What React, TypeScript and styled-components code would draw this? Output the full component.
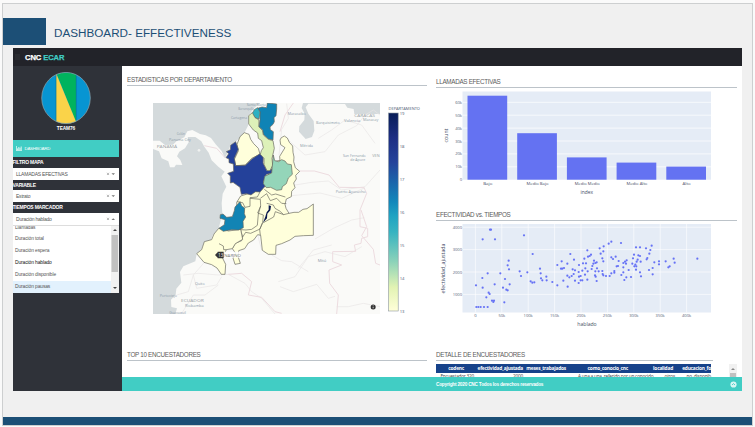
import React from 'react';
import styled, { createGlobalStyle } from 'styled-components';

const Global = createGlobalStyle`
  * { box-sizing: border-box; }
  body { margin: 0; background: #fafafa; font-family: "Liberation Sans", Arial, sans-serif; overflow: hidden; }
  svg { display: block; }
  svg text { font-family: "Open Sans", "Noto Sans", sans-serif; }
`;

/* ---------- slide frame ---------- */
const Page = styled.div`
  width: 755px;
  height: 427px;
  padding: 3px 2px 1px;
  overflow: hidden;
`;
const Slide = styled.main`
  display: flex;
  flex-direction: column;
  width: 751px;
  height: 423px;
  border: 1px solid #cdcfd0;
  background: #f0f0f0;
`;
const TitleRow = styled.header`
  display: flex;
  align-items: flex-start;
  height: 44px;
  padding-top: 14px;
`;
const Accent = styled.div`
  width: 43px;
  height: 27px;
  background: #1c4f76;
`;
const Title = styled.h1`
  margin: 0 0 0 8px;
  font-size: 11.7px;
  line-height: 30px;
  font-weight: 400;
  color: #1c4f76;
  letter-spacing: 0;
  white-space: nowrap;
`;
const BottomBar = styled.div`
  height: 8px;
  margin-top: auto;
  background: #1c4f76;
`;

/* ---------- dashboard ---------- */
const Dashboard = styled.section`
  display: grid;
  grid-template-columns: 109px 620px;
  grid-template-rows: 18px 311px 14px;
  width: 729px;
  height: 343px;
  margin-left: 10px;
  background: #fff;
  overflow: hidden;
`;
const TopBar = styled.div`
  display: flex;
  align-items: center;
  grid-column: 1 / 3;
  padding-left: 2px;
  background: #222329;
`;
const MenuIcon = styled.svg`
  width: 5px;
  height: 6px;
  margin-right: 5px;
`;
const Brand = styled.div`
  font: 700 7.6px/18px "Liberation Sans", Arial, sans-serif;
  color: #fff;
  letter-spacing: -0.1px;
  -webkit-text-stroke: 0.25px currentColor;
  padding-top: 1px;
  white-space: nowrap;
  span { color: #41cdc4; }
`;
const Sidebar = styled.aside`
  grid-row: 2 / 4;
  display: flex;
  flex-direction: column;
  padding-right: 3px;
  background: #2f3239;
  overflow: hidden;
`;
const Avatar = styled.svg`
  width: 50px;
  height: 52px;
  margin: 6px 0 0 28px;
  flex: none;
`;
const Team = styled.div`
  height: 9px;
  margin: 0 0 7px;
  text-align: center;
  font-size: 4.8px;
  line-height: 10px;
  font-weight: 700;
  letter-spacing: -0.1px;
  color: #fff;
`;
const NavButton = styled.div`
  display: flex;
  align-items: center;
  gap: 2.5px;
  flex: none;
  height: 17px;
  padding: 0 3px 1px;
  background: #41cdc4;
  color: #fff;
  font-size: 4.4px;
  letter-spacing: -0.25px;
`;
const FieldLabel = styled.div<{ $h: number }>`
  flex: none;
  height: ${p => p.$h}px;
  line-height: ${p => p.$h}px;
  margin-left: -0.5px;
  font-size: 5px;
  font-weight: 700;
  letter-spacing: -0.22px;
  color: #fff;
  white-space: nowrap;
`;
const Select = styled.div`
  display: flex;
  align-items: center;
  flex: none;
  height: 12px;
  padding: 0 3px;
  background: #fff;
  color: #555;
  font-size: 5px;
  line-height: 12px;
  letter-spacing: -0.22px;
  white-space: nowrap;
`;
const SelectTools = styled.svg`
  width: 10px;
  height: 6px;
  margin-left: auto;
`;
const Menu = styled.div`
  display: grid;
  grid-template-columns: 1fr 8px;
  flex: none;
  height: 67.5px;
  background: #fff;
  overflow: hidden;
  border-top: 1px solid #ddd;
`;
const Options = styled.div`
  margin-top: -4.5px;
`;
const Option = styled.div<{ $active?: boolean; $bold?: boolean }>`
  height: 11.9px;
  padding-left: 2px;
  font-size: 4.9px;
  line-height: 12px;
  letter-spacing: -0.1px;
  white-space: nowrap;
  color: ${p => (p.$bold ? '#111' : '#555')};
  background: ${p => (p.$active ? '#e2f1fd' : 'transparent')};
`;
const Scroller = styled.svg`
  width: 8px;
  height: 67px;
`;

const Content = styled.div`
  display: grid;
  grid-template-columns: 300px 301px;
  column-gap: 9px;
  padding-left: 5px;
  overflow: hidden;
`;
const Column = styled.div<{ $top: number }>`
  display: flex;
  flex-direction: column;
  padding-top: ${p => p.$top}px;
  min-height: 0;
`;
const Heading = styled.h2<{ $width?: number }>`
  flex: none;
  margin: 0;
  width: ${p => p.$width ?? 301}px;
  height: 11px;
  font-size: 6.3px;
  line-height: 10.6px;
  font-weight: 400;
  letter-spacing: -0.3px;
  color: #5c5c5c;
  border-bottom: 1px solid #bcc3c9;
  white-space: nowrap;
`;
const Graphic = styled.svg<{ $w: number; $h: number }>`
  flex: none;
  width: ${p => p.$w}px;
  height: ${p => p.$h}px;
`;
const TableArea = styled.div`
  position: relative;
  display: flex;
  justify-content: space-between;
  height: 16px;
  padding-top: 3px;
`;
const Table = styled.div`
  width: 275px;
`;
const Row = styled.div<{ $head?: boolean }>`
  display: grid;
  grid-template-columns: 38px 49px 55px 70px 27px 36px;
  height: ${p => (p.$head ? 9 : 7)}px;
  line-height: ${p => (p.$head ? 8.5 : 6.6)}px;
  font-size: ${p => (p.$head ? 4.8 : 4.7)}px;
  font-weight: ${p => (p.$head ? 700 : 400)};
  font-family: "Open Sans", sans-serif;
  letter-spacing: -0.2px;
  text-align: right;
  white-space: nowrap;
  color: ${p => (p.$head ? '#fff' : '#444')};
  background: ${p => (p.$head ? '#16428a' : '#fff')};
`;
const Cell = styled.span<{ $pad?: number }>`
  padding-right: ${p => p.$pad ?? 0}px;
`;
const Spotlight = styled.div`
  position: absolute;
  left: 275px;
  top: -1px;
  width: 18px;
  height: 17px;
  border-radius: 50%;
  background: #fff;
`;
const Footer = styled.footer`
  display: flex;
  align-items: center;
  justify-content: space-between;
  grid-column: 2;
  padding: 0 5px 0 314px;
  background: #41cdc4;
  color: #fff;
  font-size: 4.7px;
  font-weight: 700;
  letter-spacing: -0.2px;
`;

/* ---------- choropleth map ---------- */
const PALE = '#ffffdb';
const regions: { d: string; fill: string }[] = [
  { fill: PALE, d: 'M405 135L409 128 418 123 427 129 433 142 443 153 444 172 447 186 446 200 451 218 464 229 452 241 454 252 446 264 450 278 440 289 439 305 424 312 420 328 423 340 432 355 447 352 461 352 474 343 486 341 505 327 505 421 476 422 450 424 435 435 410 446 393 451 392 478 370 478 352 466 347 421 338 419 326 435 310 444 299 461 281 467 280 487 286 505 270 508 264 489 272 475 262 461 271 445 290 437 293 426 287 405 276 340 275 322 287 303 320 293 350 285 362 258 380 215 385 200 405 196 404 184 412 171 420 158 407 149Z' },
  { fill: PALE, d: 'M222 399L250 408 287 403 293 433 271 446 262 461 244 464 232 488 242 508 240 538 229 538 216 519 200 509 177 502 155 476 170 464 178 440 200 434 207 417Z' },
  { fill: PALE, d: 'M298 113L312 118 317 133 326 146 340 160 345 178 320 190 301 210 272 212 268 193 280 168 276 148 285 125Z' },
  { fill: '#24419a', d: 'M272 140L280 163 268 190 272 212 301 211 322 191 345 176 355 184 354 204 366 227 382 222 380 235 364 238 355 261 361 273 350 285 345 291 331 290 318 300 305 296 289 298 285 277 264 262 256 264 256 243 248 235 266 229 265 207 252 203 252 192 243 188 251 176 244 170 256 164 257 151Z' },
  { fill: '#0f83b5', d: 'M367 24L395 27 395 42 393 62 387 68 388 80 384 88 375 96 376 104 385 110 384 135 370 132 355 118 353 105 342 95 345 75 345 50 338 40 351 36 365 38Z' },
  { fill: '#2cb1c2', d: 'M338 38L345 52 342 72 330 68 322 55 328 44Z' },
  { fill: '#ddf1b9', d: 'M322 53L330 68 342 75 341 95 352 106 355 120 370 133 384 137 388 160 381 190 383 211 375 227 366 227 357 208 357 190 346 178 349 167 355 158 350 137 340 130 338 114 325 105 311 87 311 62Z' },
  { fill: '#94d5b9', d: 'M385 180L389 197 401 200 410 194 420 198 427 207 439 209 442 238 430 249 424 266 412 275 410 284 395 286 377 277 364 278 355 266 359 244 380 234Z' },
  { fill: '#1284b4', d: 'M285 320L290 333 299 339 298 356 302 366 294 379 295 398 281 405 259 404 235 409 222 400 238 389 240 374 225 370 226 359 234 357 245 367 262 365 268 347 270 336Z' },
];
const borders = 'M276 320L293 323 300 337 315 334 315 308 337 306 345 291M315 310L346 313 347 333 340 357 337 391 320 403 303 405 287 404M346 310L365 296 376 317 395 310 410 325 424 326M358 283L380 300 392 297 421 306M365 325L385 330 390 340 404 348 416 359 432 355M355 383L366 377 386 366 391 350 416 359M347 333L338 354 355 360 353 382 345 402 317 415 302 412 293 426M353 383L344 403 346 421M222 446L235 453 236 464 244 464';
const roads = [
  'M243 370L270 360 330 390 350 465M115 540L160 535 220 540 250 538 300 565 320 590 350 610 390 657',
  'M95 600L130 590 145 540 180 500M145 540L155 580 215 570 230 545M110 655L145 600 180 600 220 570',
  'M380 480L410 497 440 500 490 530M400 560L450 545 490 485 540 470 600 485 650 455M405 575L445 590 515 568 550 610 570 604',
  'M450 270L500 262 550 258 590 285 660 275 705 225M430 135L480 180 540 170 580 120 635 92 660 60',
  'M410 315L440 302 525 294 590 310 660 278M520 130L560 105 600 75 650 90 690 145',
  'M510 432L565 400 620 375 658 368M575 635L610 635 655 625 705 635M460 520L505 465 560 450',
  'M425 26L430 70 410 103 402 180M660 60L685 45 705 60',
];
const frontiers = [
  'M250 538L290 535 320 560 310 600 350 607 390 650 410 655',
  'M464 228L508 228 552 240 583 277 657 278 665 295 645 345 645 395 668 400 668 425 650 430 648 445 628 450 632 469 563 470 563 500 590 510 552 525 554 565 580 600 575 657',
  'M648 345L665 395 650 422 685 463 692 505 705 510M178 152L215 160 240 188M445 24L420 60 405 110',
];
const places: { x: number; y: number; t: string; w: number; big?: boolean }[] = [
  { x: 35, y: 159, t: 'PANAMÁ', w: 61, big: true }, { x: 95, y: 119, t: 'Colón', w: 25 },
  { x: 72, y: 138, t: 'Panama City', w: 66 }, { x: 305, y: 32, t: 'Santa Marta', w: 58 },
  { x: 280, y: 44, t: 'Barranquilla', w: 47 }, { x: 258, y: 71, t: 'Cartagena', w: 48 },
  { x: 428, y: 60, t: 'Maracaibo', w: 54 }, { x: 513, y: 87, t: 'Barquisimeto', w: 71 },
  { x: 597, y: 81, t: 'Valencia', w: 49 }, { x: 628, y: 66, t: 'CARACAS', w: 62, big: true },
  { x: 654, y: 78, t: 'Maracay', w: 46 }, { x: 465, y: 157, t: 'Mérida', w: 39 },
  { x: 594, y: 186, t: 'San Fernando', w: 68 }, { x: 616, y: 198, t: 'de Apure', w: 45 },
  { x: 682, y: 186, t: 'VEN', w: 22, big: true }, { x: 572, y: 294, t: 'Puerto Ayacucho', w: 90 },
  { x: 518, y: 500, t: 'Mitú', w: 26 }, { x: 150, y: 569, t: 'Quito', w: 29 },
  { x: 44, y: 607, t: 'Portoviejo', w: 52 }, { x: 108, y: 621, t: 'ECUADOR', w: 68, big: true },
  { x: 120, y: 635, t: 'Riobamba', w: 56 }, { x: 73, y: 656, t: 'Guayaquil', w: 50 },
];

const ColombiaMap = () => (
  <Graphic $w={300} $h={264} viewBox="127 86 300 264">
    <defs>
      <linearGradient id="scale" x1="0" y1="0" x2="0" y2="1">
        <stop offset="0" stopColor="#081d58" />
        <stop offset=".125" stopColor="#1d2e83" />
        <stop offset=".25" stopColor="#24439b" />
        <stop offset=".45" stopColor="#1288bb" />
        <stop offset=".52" stopColor="#1fa3c2" />
        <stop offset=".6" stopColor="#36b3c1" />
        <stop offset=".75" stopColor="#8bd2b9" />
        <stop offset=".88" stopColor="#e2f3b3" />
        <stop offset="1" stopColor="#ffffd9" />
      </linearGradient>
    </defs>
    <svg x="153" y="103" width="227" height="211" viewBox="24 24 681 633" preserveAspectRatio="none">
      <rect x="24" y="24" width="681" height="633" fill="#d4dadc" />
      <path fill="#fafaf8" d="M345 24L325 42 310 62 309 92 296 118 272 140 256 152 248 172 240 190 230 168 212 148 198 129 182 121 165 117 142 105 127 109 118 127 95 138 84 149 60 150 44 137 24 137 24 162 42 169 50 190 70 199 75 217 88 217 93 209 112 210 106 195 96 184 103 170 120 160 131 142 128 126 151 126 169 139 178 155 191 173 200 196 220 215 239 230 229 244 244 275 233 296 230 325 232 355 221 401 203 421 198 435 179 440 168 465 155 477 151 499 115 514 105 531 109 563 94 581 92 599 78 614 79 636 96 640 91 657 705 657 705 57 628 57 626 42 607 38 600 27 490 26 482 37 490 56 506 78 508 107 501 126 482 132 462 110 463 94 478 75 479 56 470 39 474 24Z" />
      <circle cx="162" cy="166" r="4" fill="#f0f1f0" />
      <g fill="none" strokeWidth="2" strokeLinejoin="round">
        {roads.map(d => <path key={d} d={d} stroke="#e9e6e6" />)}
        {frontiers.map(d => <path key={d} d={d} stroke="#eddce0" strokeWidth="3" />)}
      </g>
      <g stroke="#66665c" strokeWidth="2" strokeLinejoin="round">
        {regions.map(r => <path key={r.d} d={r.d} fill={r.fill} />)}
        <path d={borders} fill="none" />
      </g>
      <path fill="#08164d" d="M371 331L378 333 376 346 367 356 366 370 354 383 361 365 365 352 371 344Z" />
      {places.map(p => (
        <text key={p.t} x={p.x} y={p.y} textLength={p.w} lengthAdjust="spacingAndGlyphs" fontSize={p.big ? 12 : 10} fill={p.big ? '#979da2' : '#8c9baa'}>{p.t}</text>
      ))}
      <path fill="#fff" opacity=".85" d="M234 470H288V488H234Z" />
      <path fill="#333" d="M210 480L218 472V470H236V490H218V488Z" />
      <text x="220" y="486" fontSize="14" fill="#fff" textLength="14" lengthAdjust="spacingAndGlyphs">13</text>
      <text x="238" y="485" fontSize="13" fill="#777" textLength="50" lengthAdjust="spacingAndGlyphs">NARIÑO</text>
      <circle cx="684.5" cy="636" r="7.5" fill="#333" />
      <path d="M684.5 631V633M684.5 635V640" stroke="#fff" strokeWidth="2" />
    </svg>
    <text x="388.5" y="110" fontSize="4.3" fill="#4c5770" textLength="31.5" lengthAdjust="spacingAndGlyphs">DEPARTAMENTO</text>
    <rect x="388.5" y="113" width="9.7" height="198" fill="url(#scale)" stroke="#8d97a0" strokeWidth=".6" />
    {[19, 18, 17, 16, 15, 14, 13].map((n, i) => (
      <text key={n} x="399.7" y={114.7 + i * 33.1} fontSize="4.2" fill="#4c5770">{n}</text>
    ))}
  </Graphic>
);

/* ---------- bar chart ---------- */
const bars = [
  { name: 'Bajo', top: 95.7, w: 9 }, { name: 'Medio Bajo', top: 133.2, w: 22 },
  { name: 'Medio Medio', top: 157.4, w: 25 }, { name: 'Medio Alto', top: 162.6, w: 21 },
  { name: 'Alto', top: 166.6, w: 8 },
];
const BarChart = () => (
  <Graphic $w={301} $h={122} viewBox="436 88 301 122">
    <rect x="462.5" y="91.5" width="248.5" height="88.2" fill="#e5ecf6" />
    {[0, 1, 2, 3, 4, 5, 6].map(n => (
      <g key={n}>
        {n > 0 && <path d={`M462.5 ${179.7 - n * 12.9}H711`} stroke="#fff" strokeWidth=".7" />}
        <text x="462" y={181.2 - n * 12.9} fontSize="4.1" textAnchor="end" fill="#56637a">{n ? `${n}0k` : '0'}</text>
      </g>
    ))}
    {bars.map((b, i) => (
      <g key={b.name}>
        <rect x={467.5 + i * 49.7} y={b.top} width="39.7" height={179.7 - b.top} fill="#6472f2" />
        <text x={487.8 + i * 49.7} y="184.5" fontSize="4.1" textAnchor="middle" textLength={b.w} lengthAdjust="spacingAndGlyphs" fill="#3f4c64">{b.name}</text>
      </g>
    ))}
    <text x="586.7" y="193.5" fontSize="5.2" textAnchor="middle" textLength="12.5" lengthAdjust="spacingAndGlyphs" fill="#3f4c64">index</text>
    <text transform="translate(447.5 135.5) rotate(-90)" fontSize="5.2" textAnchor="middle" fill="#3f4c64">count</text>
  </Graphic>
);

/* ---------- scatter chart: values are thirds of a pixel from (430, 205) ---------- */
const points: [number, number][] = [
  [138, 241], [139, 306], [145, 306], [152, 306], [162, 306], [173, 306], [158, 103], [180, 74], [183, 74], [195, 103], [282, 91],
  [157, 219], [173, 205], [158, 248], [169, 277], [176, 263], [179, 267], [194, 238], [211, 205], [186, 287], [192, 287], [190, 291],
  [223, 292], [225, 222], [219, 248], [229, 254], [233, 256], [239, 238], [236, 167], [233, 181], [237, 193], [269, 199], [273, 213],
  [292, 202], [308, 147], [302, 229], [307, 233], [313, 232], [330, 191], [332, 205], [333, 220], [337, 226], [349, 215], [350, 226],
  [367, 231], [382, 241], [382, 180], [395, 169], [393, 191], [397, 191], [402, 189], [412, 176], [421, 147], [432, 164], [400, 227],
  [413, 245], [412, 212], [418, 217], [425, 213], [428, 193], [435, 196], [431, 207], [435, 227], [447, 180], [446, 201], [447, 215],
  [452, 213], [446, 234], [452, 226], [457, 226], [457, 197], [459, 175], [463, 161], [468, 175], [466, 190], [465, 209], [473, 199],
  [472, 136], [474, 155], [479, 153], [472, 224], [483, 149], [485, 192], [492, 167], [490, 176], [487, 183],
  [496, 174], [500, 172], [501, 190], [496, 199], [506, 199], [495, 211], [497, 215], [500, 228], [509, 130], [521, 124], [520, 139],
  [512, 146], [517, 160], [520, 169], [517, 198], [518, 207], [520, 211], [528, 213], [539, 213], [544, 205], [536, 116], [544, 110],
  [573, 114], [544, 157], [549, 162], [557, 155], [566, 168], [560, 184], [564, 183], [553, 198], [553, 203], [580, 187], [580, 174],
  [585, 170], [590, 166], [588, 176], [580, 202], [574, 210], [589, 217], [583, 225], [603, 216], [596, 195], [609, 160], [612, 149],
  [607, 176], [618, 127], [630, 127], [625, 151], [630, 153], [632, 170], [623, 164], [620, 170], [616, 179], [619, 184], [613, 184],
  [618, 194], [630, 202], [633, 214], [648, 130], [652, 159], [650, 163], [658, 146], [661, 135], [665, 122], [657, 195], [668, 189],
  [668, 208], [673, 172], [687, 169], [687, 178], [707, 169], [719, 184], [715, 187], [731, 161], [734, 173], [802, 161],
];
const ScatterChart = () => (
  <Graphic $w={301} $h={129} viewBox="436 221 301 129">
    <rect x="462.5" y="224" width="248.5" height="88.5" fill="#e5ecf6" />
    {[4000, 3000, 2000, 1000].map((n, i) => (
      <g key={n}>
        <path d={`M462.5 ${227.2 + i * 22.4}H711`} stroke="#fff" strokeWidth=".6" />
        <text x="462" y={228.7 + i * 22.4} fontSize="4.1" textAnchor="end" fill="#56637a">{n}</text>
      </g>
    ))}
    {[0, 50, 100, 150, 200, 250, 300, 350, 400].map((n, i) => (
      <g key={n}>
        <path d={`M${475.4 + i * 26.4} 224V312.5`} stroke="#fff" strokeWidth=".6" />
        <text x={475.4 + i * 26.4} y="317.2" fontSize="4.1" textAnchor="middle" fill="#56637a">{n ? `${n}k` : '0'}</text>
      </g>
    ))}
    {points.map(([x, y], i) => <circle key={i} cx={430 + x / 3} cy={205 + y / 3} r="1.1" fill="#6672f5" />)}
    <text x="587" y="326.3" fontSize="5.1" textAnchor="middle" fill="#3f4c64">hablado</text>
    <text transform="translate(444.5 268.5) rotate(-90)" fontSize="4.9" textAnchor="middle" textLength="50" lengthAdjust="spacingAndGlyphs" fill="#3f4c64">efectividad_ajustada</text>
  </Graphic>
);

const Tools = ({ open }: { open?: boolean }) => (
  <SelectTools viewBox="0 0 10 6">
    <path d="M1 1.8L3 4M3 1.8L1 4" stroke="#888" strokeWidth=".6" />
    <path d={open ? 'M5.5 4L7.3 2.3 9 4Z' : 'M5.5 2.3L7.3 4 9 2.3Z'} fill="#777" />
  </SelectTools>
);

export default function App() {
  return (
    <Page>
      <Global />
      <Slide>
        <TitleRow>
          <Accent />
          <Title>DASHBOARD- EFFECTIVENESS</Title>
        </TitleRow>
        <Dashboard>
          <TopBar>
            <MenuIcon viewBox="0 0 5 6"><path d="M0 1H5M0 3H5M0 5H5" stroke="#383a40" strokeWidth=".8" /></MenuIcon>
            <Brand>CNC <span>ECAR</span></Brand>
          </TopBar>
          <Sidebar>
            <Avatar viewBox="0 0 50 52">
              <defs><clipPath id="disc"><ellipse cx="25" cy="26" rx="24.3" ry="25.6" /></clipPath></defs>
              <g clipPath="url(#disc)">
                <path fill="#0795d2" d="M0 0H50V52H0Z" />
                <path fill="#00b35e" d="M15 0H35V50Z" />
                <path fill="#fad349" d="M15 1L36 52H15Z" />
                <path d="M15 0V52M35.3 0V48" stroke="#08769b" strokeWidth=".7" />
              </g>
              <ellipse cx="25" cy="26" rx="24.3" ry="25.6" fill="none" stroke="#8ba3ae" strokeWidth=".7" />
            </Avatar>
            <Team>TEAM76</Team>
            <NavButton>
              <svg width="6" height="5" viewBox="0 0 6 5"><path d="M.3 0V4.7H6M1.6 4V2.4M2.8 4V1M4 4V1.8M5.2 4V.5" fill="none" stroke="#fff" strokeWidth=".8" /></svg>
              DASHBOARD
            </NavButton>
            <FieldLabel $h={11}>FILTRO MAPA</FieldLabel>
            <Select>LLAMADAS EFECTIVAS<Tools /></Select>
            <FieldLabel $h={10}>VARIABLE</FieldLabel>
            <Select>Estrato<Tools /></Select>
            <FieldLabel $h={11}>TIEMPOS MARCADOR</FieldLabel>
            <Select>Duración hablado<Tools open /></Select>
            <Menu>
              <Options>
                <Option>Llamadas</Option>
                <Option>Duración total</Option>
                <Option>Duración espera</Option>
                <Option $bold>Duración hablado</Option>
                <Option>Duración disponible</Option>
                <Option $active>Duración pausas</Option>
              </Options>
              <Scroller viewBox="0 0 8 67">
                <path fill="#f1f1f1" d="M0 0H8V67H0Z" />
                <path fill="#c1c1c1" d="M.5 9H7V46H.5Z" />
                <path fill="#444" d="M2 5L4 3 6 5ZM2 61L4 63 6 61Z" />
              </Scroller>
            </Menu>
          </Sidebar>
          <Content>
            <Column $top={9}>
              <Heading $width={300}>ESTADISTICAS POR DEPARTAMENTO</Heading>
              <ColombiaMap />
              <Heading $width={300}>TOP 10 ENCUESTADORES</Heading>
            </Column>
            <Column $top={11}>
              <Heading>LLAMADAS EFECTIVAS</Heading>
              <BarChart />
              <Heading>EFECTIVIDAD vs. TIEMPOS</Heading>
              <ScatterChart />
              <Heading $width={277}>DETALLE DE ENCUESTADORES</Heading>
              <TableArea>
                <Table>
                  <Row $head>
                    <Cell $pad={10}>codenc</Cell><Cell>efectividad_ajustada</Cell><Cell $pad={12}>meses_trabajados</Cell>
                    <Cell $pad={20}>como_conocio_cnc</Cell><Cell $pad={2}>localidad</Cell><Cell>educacion_fo</Cell>
                  </Row>
                  <Row>
                    <Cell>Encuestador 320</Cell><Cell>2000</Cell><Cell />
                    <Cell>A una a una, referido por un conocido</Cell><Cell>otros</Cell><Cell>no_disponib</Cell>
                  </Row>
                </Table>
                <svg width="8" height="13" viewBox="0 0 8 13">
                  <path fill="#f1f1f1" d="M0 0H8V13H0Z" /><path fill="#c1c1c1" d="M1 9H7V13H1Z" /><path fill="#888" d="M2 6L4 4 6 6Z" />
                </svg>
                <Spotlight />
              </TableArea>
            </Column>
          </Content>
          <Footer>
            Copyright 2020 CNC Todos los derechos reservados
            <svg width="7" height="7" viewBox="0 0 7 7">
              <circle cx="3.5" cy="3.5" r="3.1" fill="#d8f6f3" /><path d="M2 4L3.5 2.6 5 4" fill="none" stroke="#41cdc4" strokeWidth=".9" />
            </svg>
          </Footer>
        </Dashboard>
        <BottomBar />
      </Slide>
    </Page>
  );
}
